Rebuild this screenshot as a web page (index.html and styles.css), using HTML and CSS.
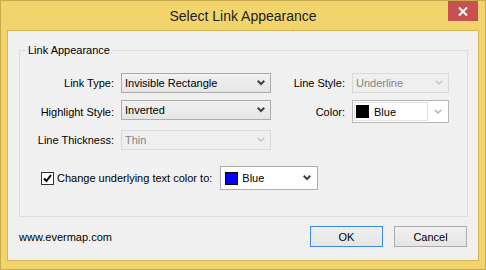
FILE: index.html
```html
<!DOCTYPE html>
<html lang="en">
<head>
  <meta charset="UTF-8">
  <title>Select Link Appearance</title>
  <link rel="stylesheet" href="styles.css">
</head>
<body>
  <div class="window">
    <div class="titlebar">
      <span class="title">Select Link Appearance</span>
      <div class="close">
        <svg width="10" height="9" viewBox="0 0 10 9"><path d="M1 0.5 L9 8.5 M9 0.5 L1 8.5" stroke="#fff" stroke-width="2"/></svg>
      </div>
    </div>

    <div class="client">
      <fieldset class="group">
        <legend>Link Appearance</legend>
        <div class="grid">
          <label class="lbl">Link Type:</label>
          <div class="combo"><span>Invisible Rectangle</span><svg class="arrow" width="8" height="6" viewBox="0 0 8 6"><path d="M0.7 0.7 L4 4 L7.3 0.7" fill="none" stroke="#444" stroke-width="2"/></svg></div>
          <label class="lbl">Line Style:</label>
          <div class="combo disabled"><span>Underline</span><svg class="arrow" width="8" height="6" viewBox="0 0 8 6"><path d="M0.7 0.7 L4 4 L7.3 0.7" fill="none" stroke="#c4c4c4" stroke-width="1.5"/></svg></div>

          <label class="lbl">Highlight Style:</label>
          <div class="combo"><span>Inverted</span><svg class="arrow" width="8" height="6" viewBox="0 0 8 6"><path d="M0.7 0.7 L4 4 L7.3 0.7" fill="none" stroke="#444" stroke-width="2"/></svg></div>
          <label class="lbl">Color:</label>
          <div class="color-combo tall">
            <div class="color-inner"><span class="swatch black"></span><span>Blue</span></div>
            <svg class="arrow" width="8" height="6" viewBox="0 0 8 6"><path d="M0.7 0.7 L4 4 L7.3 0.7" fill="none" stroke="#b4b4b4" stroke-width="1.5"/></svg>
          </div>

          <label class="lbl">Line Thickness:</label>
          <div class="combo disabled"><span>Thin</span><svg class="arrow" width="8" height="6" viewBox="0 0 8 6"><path d="M0.7 0.7 L4 4 L7.3 0.7" fill="none" stroke="#c4c4c4" stroke-width="1.5"/></svg></div>
        </div>

        <div class="check-row">
          <span class="checkbox"><svg width="11" height="11" viewBox="0 0 11 11"><path d="M2 5.5 L4.5 8 L9 2" fill="none" stroke="#000" stroke-width="2"/></svg></span>
          <span class="check-label">Change underlying text color to:</span>
          <div class="color-combo wide">
            <span class="swatch blue"></span><span>Blue</span>
            <svg class="arrow" width="8" height="6" viewBox="0 0 8 6"><path d="M0.7 0.7 L4 4 L7.3 0.7" fill="none" stroke="#444" stroke-width="2"/></svg>
          </div>
        </div>
      </fieldset>

      <div class="footer">
        <span class="site">www.evermap.com</span>
        <div class="buttons">
          <button class="btn default">OK</button>
          <button class="btn">Cancel</button>
        </div>
      </div>
    </div>
  </div>
</body>
</html>
```

FILE: styles.css
```css
body {
  margin: 0;
  font-family: "Liberation Sans", Arial, sans-serif;
  font-size: 11px;
  color: #000;
}

.window {
  width: 486px;
  height: 270px;
  box-sizing: border-box;
  border: 1px solid #c9aa4e;
  background: #f1d56c;
  display: flex;
  flex-direction: column;
  position: relative;
}

.titlebar {
  height: 29px;
  display: flex;
  align-items: center;
  justify-content: center;
}

.title {
  font-size: 14px;
  color: #222;
  margin-top: 1px;
}

.close {
  position: absolute;
  top: 0;
  right: 7px;
  width: 30px;
  height: 20px;
  background: #c75050;
  display: flex;
  align-items: center;
  justify-content: center;
}

.client {
  flex: 1;
  margin: 0 6px 8px 6px;
  border: 1px solid #d4b553;
  background: #f0f0f0;
  display: flex;
  flex-direction: column;
}

.group {
  margin: 13px 10px 0 11px;
  padding: 17px 0 26px 0;
  border: 1px solid #dcdcdc;
  min-width: 0;
}

.group legend {
  margin-left: 6px;
  padding: 0 2px;
}

.grid {
  display: grid;
  grid-template-columns: 101px 150px 81px 97px;
  grid-template-rows: 20px 23px 19px;
  row-gap: 7px;
  align-items: start;
}

.grid > :nth-child(n+3):nth-child(-n+4) {
  align-self: center;
}

.lbl {
  text-align: right;
  padding-right: 7px;
  white-space: nowrap;
  align-self: center;
}

.combo {
  height: 20px;
  box-sizing: border-box;
  border: 1px solid #acacac;
  background: linear-gradient(#f2f2f2, #e5e5e5);
  display: flex;
  align-items: center;
  padding: 0 5px 0 3px;
}

.combo span {
  flex: 1;
}

.combo.disabled {
  border-color: #d9d9d9;
  background: #efefef;
  color: #838383;
}

.color-combo {
  box-sizing: border-box;
  border: 1px solid #b6b6b6;
  background: #fff;
  display: flex;
  align-items: center;
  padding: 0 6px 0 1px;
}

.color-combo.tall {
  height: 23px;
}

.color-inner {
  flex: 1;
  height: 19px;
  box-sizing: border-box;
  border: 1px solid #e4e4e4;
  display: flex;
  align-items: center;
  gap: 5px;
  padding-left: 1px;
  margin-right: 6px;
}

.color-combo.wide {
  width: 98px;
  height: 24px;
  margin-left: 8px;
  gap: 4px;
  padding-left: 4px;
  border-color: #acacac;
}

.color-combo.wide span:nth-child(2) {
  flex: 1;
}

.swatch {
  width: 13px;
  height: 13px;
  box-sizing: border-box;
  border: 1px solid #000;
}

.swatch.black {
  background: #000;
}

.swatch.blue {
  background: #0000ff;
}

.check-row {
  display: flex;
  align-items: center;
  margin-top: 17px;
  padding-left: 21px;
}

.checkbox {
  width: 13px;
  height: 13px;
  box-sizing: border-box;
  border: 1px solid #333;
  background: #fff;
  display: flex;
  align-items: center;
  justify-content: center;
  margin-right: 3px;
}

.footer {
  display: flex;
  align-items: center;
  justify-content: space-between;
  padding: 9px 11px 0 11px;
}

.buttons {
  display: flex;
  gap: 11px;
}

.btn {
  width: 73px;
  height: 21px;
  box-sizing: border-box;
  border: 1px solid #acacac;
  background: linear-gradient(#f0f0f0, #e5e5e5);
  font-family: "Liberation Sans", Arial, sans-serif;
  font-size: 11px;
  color: #000;
  padding: 0;
}

.btn.default {
  border-color: #3c8ce6;
}
```
